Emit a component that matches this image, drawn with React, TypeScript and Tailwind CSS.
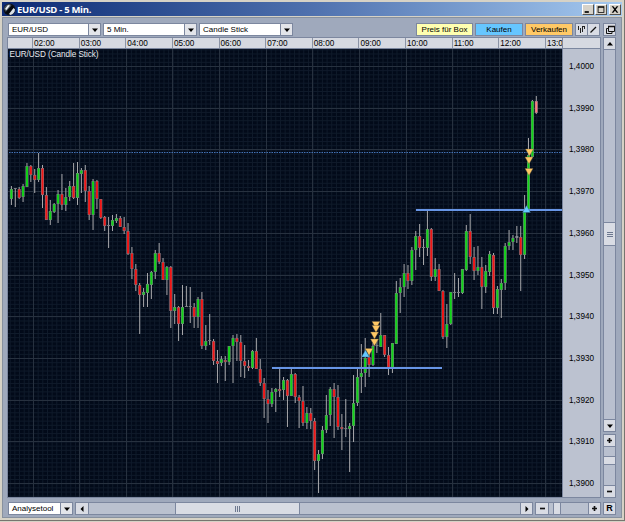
import React from 'react';

type Candle = [number, number, number, number, string];

// high, low, body top, body bottom, kind (g = up, r = down, n = flat)
const candles: Candle[] = [
  [186, 205, 189, 199, 'g'], [188, 207, 188, 189, 'n'], [187, 199, 189, 198, 'r'], [184, 202, 186, 197, 'g'],
  [163, 187, 166, 187, 'g'], [165, 182, 166, 175, 'r'], [169, 193, 175, 180, 'r'], [153, 182, 168, 180, 'g'],
  [165, 208, 168, 195, 'r'], [187, 220, 195, 220, 'r'], [200, 225, 211, 220, 'g'], [203, 213, 204, 212, 'g'],
  [190, 223, 194, 204, 'g'], [174, 210, 194, 205, 'r'], [188, 211, 197, 205, 'g'], [181, 201, 186, 197, 'g'],
  [163, 199, 186, 198, 'r'], [162, 205, 173, 198, 'g'], [168, 193, 170, 174, 'g'], [165, 202, 170, 191, 'r'],
  [186, 220, 191, 215, 'r'], [179, 230, 181, 215, 'g'], [180, 209, 181, 199, 'r'], [199, 219, 199, 218, 'r'],
  [216, 231, 217, 226, 'r'], [217, 248, 225, 226, 'n'], [215, 231, 220, 226, 'g'], [214, 223, 218, 221, 'g'],
  [216, 227, 218, 227, 'r'], [217, 234, 227, 231, 'r'], [223, 255, 231, 254, 'r'], [247, 279, 253, 269, 'r'],
  [264, 291, 269, 285, 'r'], [283, 334, 285, 295, 'r'], [288, 307, 292, 295, 'g'], [273, 307, 284, 293, 'g'],
  [271, 299, 272, 285, 'g'], [250, 279, 253, 272, 'g'], [243, 264, 253, 262, 'r'], [258, 280, 262, 280, 'r'],
  [266, 295, 267, 280, 'g'], [266, 328, 267, 311, 'r'], [294, 324, 307, 311, 'g'], [306, 341, 307, 324, 'r'],
  [285, 335, 307, 324, 'g'], [286, 307, 306, 307, 'n'], [287, 323, 306, 307, 'n'], [303, 328, 307, 317, 'r'],
  [297, 328, 299, 317, 'g'], [292, 349, 299, 346, 'r'], [325, 350, 341, 346, 'g'], [314, 345, 340, 341, 'n'],
  [339, 365, 341, 361, 'r'], [350, 383, 361, 364, 'r'], [356, 366, 359, 363, 'g'], [356, 381, 360, 362, 'r'],
  [346, 365, 346, 362, 'g'], [335, 383, 338, 346, 'g'], [334, 361, 338, 342, 'r'], [335, 377, 342, 361, 'r'],
  [345, 378, 361, 366, 'r'], [360, 371, 366, 368, 'r'], [350, 369, 351, 368, 'g'], [338, 369, 351, 369, 'r'],
  [359, 386, 369, 383, 'r'], [378, 418, 383, 399, 'r'], [390, 423, 399, 404, 'r'], [388, 407, 392, 404, 'g'],
  [388, 412, 389, 392, 'g'], [368, 397, 389, 391, 'r'], [377, 400, 380, 390, 'g'], [379, 427, 380, 396, 'r'],
  [368, 396, 374, 396, 'g'], [373, 403, 374, 397, 'r'], [395, 428, 397, 401, 'r'], [386, 426, 401, 423, 'r'],
  [407, 429, 413, 423, 'g'], [408, 429, 413, 421, 'r'], [418, 470, 421, 461, 'r'], [450, 493, 454, 461, 'g'],
  [426, 459, 430, 454, 'g'], [395, 433, 415, 430, 'g'], [387, 426, 389, 415, 'g'], [383, 438, 389, 397, 'r'],
  [385, 430, 397, 427, 'r'], [414, 450, 427, 429, 'r'], [399, 437, 428, 429, 'n'], [423, 472, 426, 429, 'g'],
  [375, 442, 403, 426, 'g'], [368, 406, 377, 403, 'g'], [344, 393, 373, 377, 'g'], [338, 387, 358, 373, 'g'],
  [353, 377, 357, 365, 'r'], [343, 366, 346, 365, 'g'], [340, 353, 345, 346, 'n'], [313, 347, 335, 347, 'g'],
  [335, 357, 335, 355, 'r'], [347, 375, 355, 368, 'r'], [343, 373, 343, 368, 'g'], [281, 344, 293, 344, 'g'],
  [278, 313, 287, 293, 'g'], [264, 297, 273, 287, 'g'], [265, 289, 273, 281, 'r'], [247, 285, 250, 281, 'g'],
  [231, 270, 236, 250, 'g'], [224, 257, 236, 248, 'r'], [239, 265, 247, 248, 'n'], [211, 256, 229, 248, 'g'],
  [228, 281, 229, 277, 'r'], [258, 281, 269, 277, 'g'], [264, 291, 269, 291, 'r'], [290, 339, 291, 337, 'r'],
  [304, 348, 324, 337, 'g'], [292, 325, 292, 324, 'g'], [273, 299, 292, 293, 'n'], [278, 297, 292, 293, 'n'],
  [269, 294, 269, 293, 'g'], [225, 271, 231, 270, 'g'], [214, 264, 231, 257, 'r'], [247, 280, 257, 271, 'r'],
  [246, 275, 267, 271, 'g'], [257, 309, 267, 287, 'r'], [265, 293, 271, 287, 'g'], [251, 276, 254, 272, 'g'],
  [253, 314, 255, 308, 'r'], [286, 314, 289, 308, 'g'], [279, 318, 283, 290, 'g'], [243, 290, 246, 283, 'g'],
  [230, 250, 242, 246, 'g'], [235, 250, 238, 242, 'g'], [226, 243, 236, 238, 'n'], [226, 291, 237, 255, 'r'],
  [195, 259, 211, 255, 'g'], [138, 211, 155, 211, 'g'], [100, 157, 101, 157, 'g'], [96, 114, 101, 113, 'l'],
];

const fills: Record<string, string> = { g: '#0fd416', r: '#f01616', n: '#8d9099', l: '#ff7a7e' };

const hours = ['02:00', '03:00', '04:00', '05:00', '06:00', '07:00', '08:00', '09:00', '10:00', '11:00', '12:00', '13:00'];
const prices = ['1,4000', '1,3990', '1,3980', '1,3970', '1,3960', '1,3950', '1,3940', '1,3930', '1,3920', '1,3910', '1,3900'];

const sells = [[529.5, 152], [529, 160], [529, 171.5], [376, 324.5], [376, 328.5], [374.5, 335], [374.5, 342], [369, 351.5]];
const buys = [[365.5, 354], [526.5, 209.5]];

const btn = 'flex shrink-0 items-center justify-center border border-[#7c879f] bg-[#d9dce4] text-black';

type Dir = 'up' | 'down' | 'left' | 'right';
const arrows: Record<Dir, string> = {
  up: 'M0 4.5L3 1L6 4.5Z',
  down: 'M0 1.5H6L3 5Z',
  left: 'M4.5 0V6L1.5 3Z',
  right: 'M1.5 0V6L4.5 3Z',
};

const Arrow = ({ dir }: { dir: Dir }) => (
  <svg width="6" height="6" viewBox="0 0 6 6">
    <path d={arrows[dir]} fill="#000" />
  </svg>
);

const Sign = ({ plus }: { plus?: boolean }) => (
  <svg width="5" height="5" viewBox="0 0 6 6">
    <path d={plus ? 'M0 2H2V0H4V2H6V4H4V6H2V4H0Z' : 'M0 2H6V4H0Z'} fill="#111" />
  </svg>
);

const Select = ({ label, className }: { label: string; className: string }) => (
  <div className={`flex h-[13px] shrink-0 border border-[#7c879f] bg-white ${className}`}>
    <span className="flex-1 pl-[3px] leading-[12px]">{label}</span>
    <span className="flex w-[12px] items-center justify-center border-l border-[#7c879f] bg-[#e3e5ea]">
      <Arrow dir="down" />
    </span>
  </div>
);

const TitleBar = () => (
  <div className="flex h-[14px] items-center bg-gradient-to-r from-[#0c2a74] via-[#4f71ae] to-[#a6caf0] pl-px">
    <svg width="13" height="13" viewBox="0 0 13 13">
      <circle cx="6.5" cy="6.5" r="6" fill="#10151d" />
      <path d="M1 6C1 3 4 .8 7 1L9 3L3 9Z" fill="#46525f" />
      <path d="M2 6L5 2L7 2.5L3.5 7Z" fill="#eef2f5" />
      <path d="M6 11L10.5 5L12 6.5C12 9 10 11.5 7.5 12Z" fill="#dbe2e8" />
      <path d="M2 10L9 2L11 4L5 11Z" fill="#05080d" />
    </svg>
    <span className="ml-px flex-1 whitespace-nowrap font-['Open_Sans',sans-serif] text-[9.5px] leading-[13px] font-bold tracking-[-0.3px] text-white">
      EUR/USD - 5 Min.
    </span>
    <div className="mr-px flex h-[11px]">
      {['M2 7H7V9H2Z', 'M2 1H10V9H2ZM3 3V8H9V3Z', 'M2 1H4L6 3.5L8 1H10L7 5L10 9H8L6 6.5L4 9H2L5 5Z'].map((d, i) => (
        <span
          key={d}
          className={`w-[12px] border border-t-white border-r-[#55534e] border-b-[#55534e] border-l-white bg-[#d6d2c9] ${i === 1 ? 'mr-[2px] ml-px' : ''}`}
        >
          <svg width="10" height="9" viewBox="0 0 12 10">
            <path d={d} fill="#000" fillRule="evenodd" />
          </svg>
        </span>
      ))}
    </div>
  </div>
);

const Toolbar = () => (
  <div className="flex h-[13px]">
    <Select label="EUR/USD" className="mr-[2px] w-[93px]" />
    <Select label="5 Min." className="mr-[2px] w-[94px]" />
    <Select label="Candle Stick" className="w-[94px]" />
    <div className="ml-auto flex text-center leading-[12px]">
      <span className="mr-[2px] w-[57px] border border-[#7c879f] bg-[#ffffb0]">Preis für Box</span>
      <span className="mr-[2px] w-[48px] border border-[#7c879f] bg-[#66c6ff]">Kaufen</span>
      <span className="mr-[2px] w-[48px] border border-[#7c879f] bg-[#ffc966]">Verkaufen</span>
      <span className={`${btn} w-[13px]`}>
        <svg width="9" height="9" viewBox="0 0 9 9">
          <path d="M1.5 1V5M3.5 3V8M5.5 1V7M7.5 1V4M5.5 1.5H8" stroke="#222" fill="none" />
        </svg>
      </span>
      <span className={`${btn} -ml-px mr-[3px] w-[13px]`}>
        <svg width="9" height="9" viewBox="0 0 9 9">
          <path d="M1.5 7.5L7 2" stroke="#111" strokeWidth="1.3" />
        </svg>
      </span>
      <span className={`${btn} w-[13px]`}>
        <svg width="10" height="10" viewBox="0 0 10 10">
          <path d="M3.5 1.5H9.5V6.5H3.5ZM3 3.5H1.5V8.5H7V7" stroke="#111" fill="none" />
          <path d="M3 1.5H10" stroke="#111" strokeWidth="1.5" />
        </svg>
      </span>
    </div>
  </div>
);

const Chart = () => (
  <svg className="block shrink-0" width="554" height="448" viewBox="8 49 554 448">
    <rect x="8" y="49" width="554" height="448" fill="#020a19" />
    {Array.from({ length: 120 }, (_, i) => (
      <rect key={i} x={9.7 + i * 4.66} y="49" width="1" height="448" fill="#101b2b" />
    ))}
    {Array.from({ length: 108 }, (_, i) => (
      <rect key={i} x="8" y={49.3 + i * 4.172} width="554" height="1" fill="#101b2b" />
    ))}
    {hours.map((h, i) => (
      <rect key={h} x={Math.round(32.5 + i * 46.63)} y="49" width="1" height="448" fill="#27313f" />
    ))}
    {prices.map((p, i) => (
      <rect key={p} x="8" y={Math.round(66 + i * 41.72)} width="554" height="1" fill="#27313f" />
    ))}
    <path d="M9 152.5H562" stroke="#4271b4" strokeDasharray="1.5 1" />
    {candles.map(([hi, lo, top, bottom, kind], i) => {
      const x = 11.4 + i * 3.888;
      return (
        <g key={i}>
          <rect x={x - 0.5} y={hi} width="1" height={lo - hi} fill="#a9a9ac" />
          <rect x={x - 1.5} y={top} width="3" height={Math.max(1, bottom - top)} fill="#7d7f86" />
          {bottom - top > 1 && (
            <rect x={x - 1} y={top + 0.5} width="2" height={bottom - top - 1} fill={fills[kind]} />
          )}
        </g>
      );
    })}
    <path d="M416 210H562M272 368H442" stroke="#6795e6" strokeWidth="2" />
    {sells.map(([x, y]) => (
      <path key={`${x}-${y}`} d={`M${x - 4} ${y - 3}h8l-4 7z`} fill="#ffc864" stroke="#6b5a3e" strokeWidth=".4" />
    ))}
    {buys.map(([x, y]) => (
      <path key={`${x}-${y}`} d={`M${x - 4} ${y + 3}h8l-4 -7z`} fill="#65c8ff" stroke="#2c5572" strokeWidth=".4" />
    ))}
    <text x="9.5" y="56.5" fill="#e8eaee" fontSize="8.2" textLength="89">
      EUR/USD (Candle Stick)
    </text>
  </svg>
);

const ChartPanel = () => (
  <div className="-ml-px flex h-[461px] w-[594px] flex-col border border-[#7c879f]">
    <div className="flex h-[11px] shrink-0 border-b border-[#7c879f] bg-[#d6d9e1]">
      <div className="flex w-[554px] overflow-hidden pl-[24px]">
        {hours.map((h) => (
          <span key={h} className="w-[46.63px] shrink-0 border-l border-[#8b94a6] pl-px text-[8.2px] leading-[11px]">
            {h}
          </span>
        ))}
      </div>
      <div className="flex-1 border-l border-[#7c879f]" />
    </div>
    <div className="flex h-[448px]">
      <Chart />
      <div className="flex flex-1 flex-col border-l border-[#7c879f] bg-[#bcc2d0] pt-[12px] pl-[6px]">
        {prices.map((p) => (
          <span key={p} className="h-[41.72px] shrink-0 text-[8.2px] leading-[11px]">
            {p}
          </span>
        ))}
      </div>
    </div>
  </div>
);

const SideBars = () => (
  <div className="flex w-[13px] flex-col">
    <div className="flex h-[395px] flex-col border border-[#7c879f] bg-[#b9c0cf]">
      <span className={`${btn} -mx-px -mt-px h-[13px]`}><Arrow dir="up" /></span>
      <span className={`${btn} -mx-px mt-[172px] h-[24px] flex-col gap-px`}>
        <i className="h-px w-[6px] bg-[#6d788f]" />
        <i className="h-px w-[6px] bg-[#6d788f]" />
        <i className="h-px w-[6px] bg-[#6d788f]" />
      </span>
      <span className={`${btn} -mx-px mt-auto -mb-px h-[13px]`}><Arrow dir="down" /></span>
    </div>
    <div className="mt-[2px] flex h-[64px] flex-col border border-[#7c879f] bg-[#b9c0cf]">
      <span className={`${btn} -mx-px -mt-px h-[13px]`}><Sign plus /></span>
      <span className={`${btn} -mx-px mt-[9px] h-[9px]`} />
      <span className={`${btn} -mx-px mt-auto -mb-px h-[13px]`}><Sign /></span>
    </div>
  </div>
);

const BottomBar = () => (
  <div className="mt-[4px] flex h-[13px]">
    <Select label="Analysetool" className="w-[65px]" />
    <div className="ml-[2px] flex w-[458px] border border-[#7c879f] bg-[#bac1cf]">
      <span className={`${btn} -my-px -ml-px w-[14px]`}><Arrow dir="left" /></span>
      <span className={`${btn} -my-px ml-[86px] w-[125px] gap-px`}>
        <i className="h-[6px] w-px bg-[#6d788f]" />
        <i className="h-[6px] w-px bg-[#6d788f]" />
        <i className="h-[6px] w-px bg-[#6d788f]" />
      </span>
      <span className={`${btn} -my-px -mr-px ml-auto w-[13px]`}><Arrow dir="right" /></span>
    </div>
    <div className="ml-[2px] flex w-[66px] border border-[#7c879f] bg-[#bac1cf]">
      <span className={`${btn} -my-px -ml-px w-[14px]`}><Sign /></span>
      <span className={`${btn} -my-px ml-[4px] w-[8px]`} />
      <span className={`${btn} -my-px -mr-px ml-auto w-[13px]`}><Sign plus /></span>
    </div>
    <span className={`${btn} ml-auto w-[13px] text-[9px] font-bold`}>R</span>
  </div>
);

export default function App() {
  return (
    <div className="h-[522px] w-[625px] overflow-hidden bg-[#d6d2c6] font-['Liberation_Sans',sans-serif] text-[8px] text-black">
      <div className="flex h-[521px] flex-col border-r border-b border-[#77756f] p-[2px]">
        <TitleBar />
        <div className="mt-px flex-1 border border-[#87919f] bg-[#9fa9bc] px-[5px] pt-[5px]">
          <Toolbar />
          <div className="mt-px flex justify-between">
            <ChartPanel />
            <SideBars />
          </div>
          <BottomBar />
        </div>
      </div>
    </div>
  );
}
